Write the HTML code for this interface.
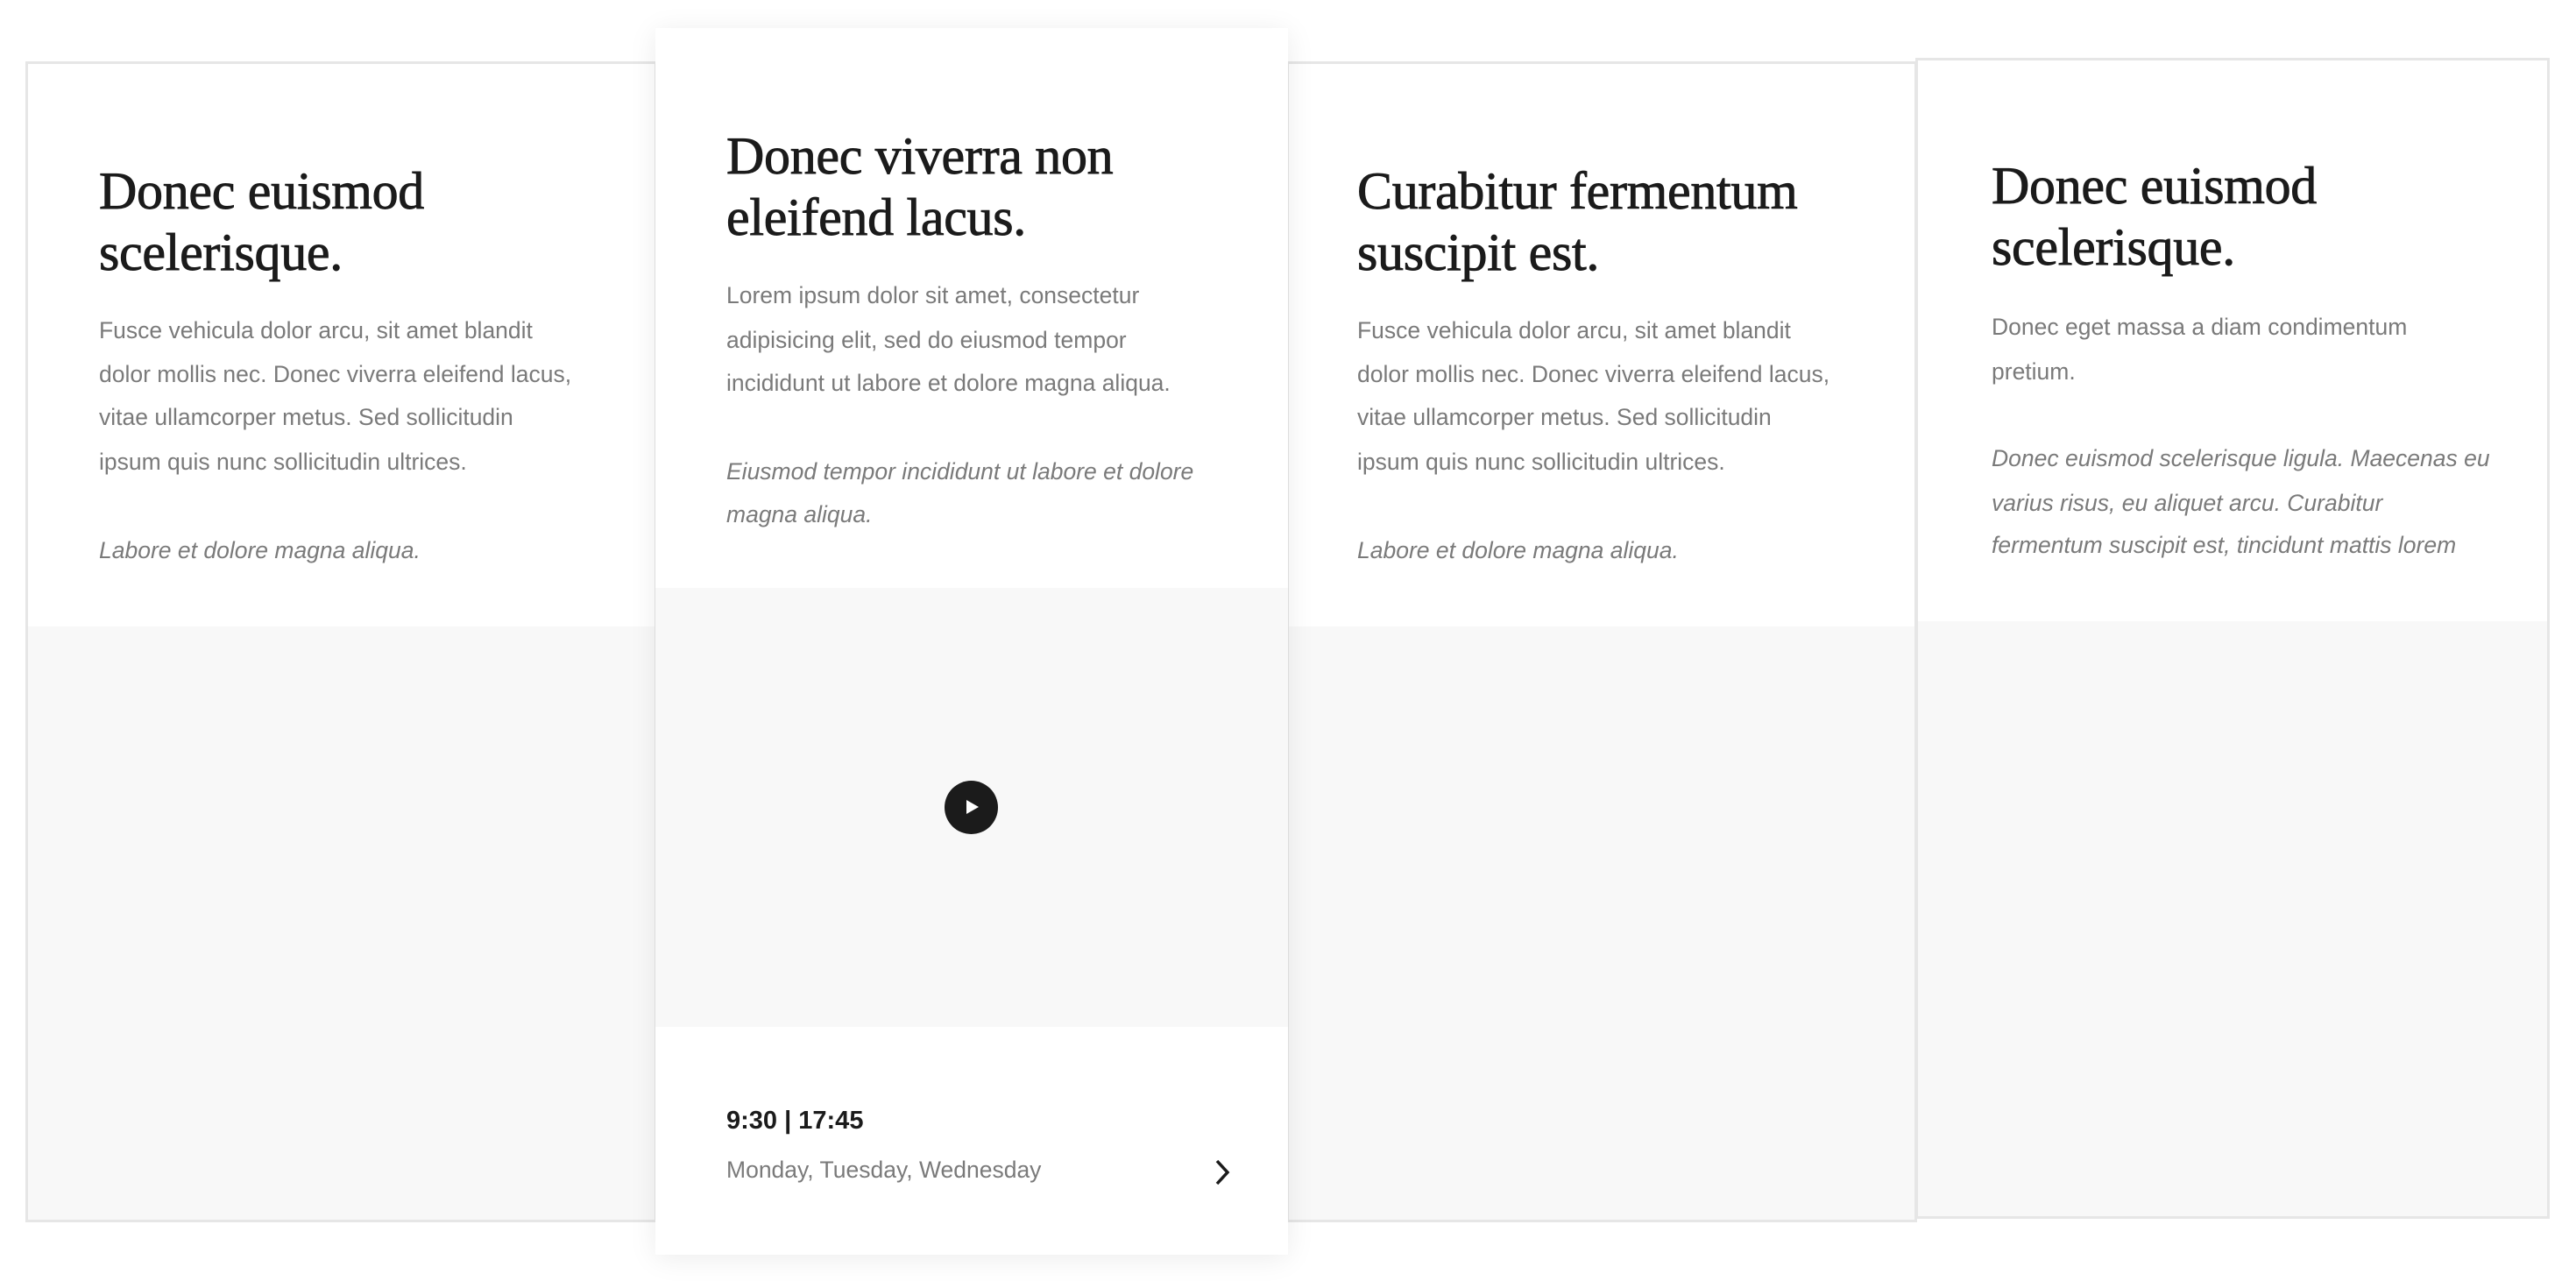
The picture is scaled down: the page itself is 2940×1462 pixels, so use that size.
<!DOCTYPE html>
<html><head><meta charset="utf-8"><style>
*{margin:0;padding:0;box-sizing:border-box}
body{width:2940px;height:1462px;background:#fff;position:relative;overflow:hidden;font-family:"Liberation Sans",sans-serif}
.card{position:absolute;background:#f8f8f8;border:3px solid #e6e6e6}
.top{position:absolute;left:0;right:0;top:0;background:#fff}
.l{position:absolute;white-space:nowrap;line-height:50px}
.t{font-family:"Liberation Serif",serif;font-size:60px;color:#1b1b1b;line-height:70px;-webkit-text-stroke:0.9px #1b1b1b;letter-spacing:-0.3px}
.b{font-size:26.5px;color:#7a7a7a}
.i{font-style:italic}
</style></head><body>

<div class="card" style="left:29px;top:70px;width:721px;height:1325px">
  <div class="top" style="height:642px"></div>
</div>
<div class="card" style="left:1468px;top:70px;width:720px;height:1325px">
  <div class="top" style="height:642px"></div>
</div>
<div class="card" style="left:2186px;top:66px;width:724px;height:1325px">
  <div class="top" style="height:640px"></div>
</div>
<div style="position:absolute;left:748px;top:32px;width:722px;height:1400px;background:#fff;box-shadow:0 4px 30px rgba(0,0,0,0.08)">
  <div style="position:absolute;left:0;right:0;top:639px;height:501px;background:#f8f8f8"></div>
  <div style="position:absolute;left:330px;top:859px;width:61px;height:61px;border-radius:50%;background:#1b1b1b"></div>
  <div style="position:absolute;left:355px;top:881px;width:0;height:0;border-left:14px solid #fff;border-top:8.5px solid transparent;border-bottom:8.5px solid transparent"></div>
</div>

<!-- card1 -->
<div class="l t" style="left:113px;top:183px">Donec euismod</div>
<div class="l t" style="left:113px;top:253px">scelerisque.</div>
<div class="l b" style="left:113px;top:352px">Fusce vehicula dolor arcu, sit amet blandit</div>
<div class="l b" style="left:113px;top:402px">dolor mollis nec. Donec viverra eleifend lacus,</div>
<div class="l b" style="left:113px;top:451px">vitae ullamcorper metus. Sed sollicitudin</div>
<div class="l b" style="left:113px;top:502px">ipsum quis nunc sollicitudin ultrices.</div>
<div class="l b i" style="left:113px;top:603px">Labore et dolore magna aliqua.</div>

<!-- card2 -->
<div class="l t" style="left:829px;top:143px">Donec viverra non</div>
<div class="l t" style="left:829px;top:213px">eleifend lacus.</div>
<div class="l b" style="left:829px;top:312px">Lorem ipsum dolor sit amet, consectetur</div>
<div class="l b" style="left:829px;top:363px">adipisicing elit, sed do eiusmod tempor</div>
<div class="l b" style="left:829px;top:412px">incididunt ut labore et dolore magna aliqua.</div>
<div class="l b i" style="left:829px;top:513px">Eiusmod tempor incididunt ut labore et dolore</div>
<div class="l b i" style="left:829px;top:562px">magna aliqua.</div>
<div class="l" style="left:829px;top:1254px;font-size:29px;font-weight:bold;color:#1b1b1b">9:30 | 17:45</div>
<div class="l b" style="left:829px;top:1310px">Monday, Tuesday, Wednesday</div>
<svg style="position:absolute;left:1384px;top:1322px" width="24" height="32" viewBox="0 0 24 32"><path d="M5 3 L17 16 L5 29" fill="none" stroke="#1b1b1b" stroke-width="3.5"/></svg>

<!-- card3 -->
<div class="l t" style="left:1549px;top:183px">Curabitur fermentum</div>
<div class="l t" style="left:1549px;top:253px">suscipit est.</div>
<div class="l b" style="left:1549px;top:352px">Fusce vehicula dolor arcu, sit amet blandit</div>
<div class="l b" style="left:1549px;top:402px">dolor mollis nec. Donec viverra eleifend lacus,</div>
<div class="l b" style="left:1549px;top:451px">vitae ullamcorper metus. Sed sollicitudin</div>
<div class="l b" style="left:1549px;top:502px">ipsum quis nunc sollicitudin ultrices.</div>
<div class="l b i" style="left:1549px;top:603px">Labore et dolore magna aliqua.</div>

<!-- card4 -->
<div class="l t" style="left:2273px;top:177px">Donec euismod</div>
<div class="l t" style="left:2273px;top:247px">scelerisque.</div>
<div class="l b" style="left:2273px;top:348px">Donec eget massa a diam condimentum</div>
<div class="l b" style="left:2273px;top:399px">pretium.</div>
<div class="l b i" style="left:2273px;top:498px">Donec euismod scelerisque ligula. Maecenas eu</div>
<div class="l b i" style="left:2273px;top:549px">varius risus, eu aliquet arcu. Curabitur</div>
<div class="l b i" style="left:2273px;top:597px">fermentum suscipit est, tincidunt mattis lorem</div>

</body></html>
